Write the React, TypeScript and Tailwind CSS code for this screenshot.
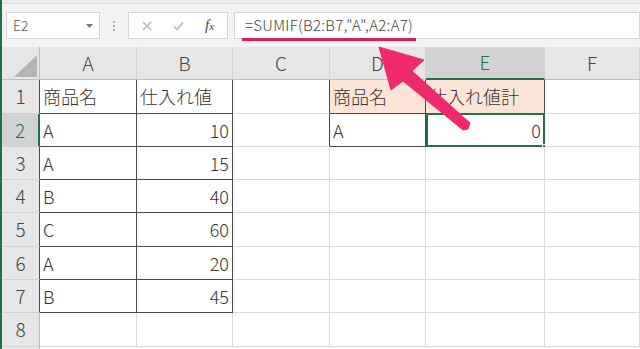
import React from "react";

type RowData = { n: number; a?: string; b?: string; d?: string; e?: string };

const rows: RowData[] = [
  { n: 1, a: "商品名", b: "仕入れ値", d: "商品名", e: "仕入れ値計" },
  { n: 2, a: "A", b: "10", d: "A", e: "0" },
  { n: 3, a: "A", b: "15" },
  { n: 4, a: "B", b: "40" },
  { n: 5, a: "C", b: "60" },
  { n: 6, a: "A", b: "20" },
  { n: 7, a: "B", b: "45" },
  { n: 8 },
];

const rowH = ["h-[34px]", "h-[33px]", "h-[33px]", "h-[33px]", "h-[34px]", "h-[33px]", "h-[33px]", "h-[34px]"];

const DARK_R = "border-r-[#4a4a4a]";
const DARK_B = "border-b-[#4a4a4a]";
const LIGHT_R = "border-r-[#dadada]";
const LIGHT_B = "border-b-[#dadada]";

function Cell({
  w,
  text,
  right,
  darkR,
  darkB,
  bg,
  children,
}: {
  w: string;
  text?: string;
  right?: boolean;
  darkR?: boolean;
  darkB?: boolean;
  bg?: string;
  children?: React.ReactNode;
}) {
  return (
    <div
      className={[
        w,
        "relative shrink-0 flex items-center border-r border-b text-[18px] font-light text-[#333] whitespace-nowrap overflow-visible",
        right ? "justify-end pr-[3px]" : "pl-[3px]",
        darkR ? DARK_R : LIGHT_R,
        darkB ? DARK_B : LIGHT_B,
        bg ?? "bg-white",
      ].join(" ")}
    >
      {text}
      {children}
    </div>
  );
}

function ColHeader({ w, label, selected }: { w: string; label: string; selected?: boolean }) {
  return (
    <div
      className={[
        w,
        "shrink-0 flex items-center justify-center border-r border-r-[#d2d2d2] text-[19px] font-light",
        selected
          ? "bg-[#d2d2d2] border-b-2 border-b-[#217346] text-[#217346]"
          : "bg-[#e6e6e6] border-b border-b-[#bdbdbd] text-[#444]",
      ].join(" ")}
    >
      {label}
    </div>
  );
}

export default function App() {
  return (
    <div className="relative w-[640px] h-[349px] overflow-hidden flex bg-[#f3f3f3] font-['Noto_Sans_CJK_JP','Noto_Sans',sans-serif]">
      <div className="w-[2px] shrink-0 bg-[#217346]" />
      <div className="flex-1 flex flex-col min-w-0">
        {/* ribbon bottom */}
        <div className="h-[4px] shrink-0 bg-[#ebebeb] border-b border-[#dcdcdc]" />
        <div className="h-[8px] shrink-0" />
        {/* formula bar */}
        <div className="h-[27px] shrink-0 flex pl-[4px]">
          <div className="w-[94px] shrink-0 bg-white border border-[#d4d4d4] flex items-center justify-between pl-[6px] pr-[6px]">
            <span className="text-[14px] text-[#555] font-light">E2</span>
            <svg width="7" height="4" viewBox="0 0 7 4">
              <polygon points="0,0 7,0 3.5,4" fill="#777" />
            </svg>
          </div>
          <div className="w-[28px] shrink-0 flex flex-col items-center justify-center gap-[2px]">
            <span className="w-[2px] h-[2px] bg-[#a8a8a8]" />
            <span className="w-[2px] h-[2px] bg-[#a8a8a8]" />
            <span className="w-[2px] h-[2px] bg-[#a8a8a8]" />
          </div>
          <div className="w-[100px] shrink-0 bg-white border border-[#d4d4d4] flex items-center">
            <svg className="ml-[13px]" width="10" height="10" viewBox="0 0 10 10">
              <path d="M1 1 L9 9 M9 1 L1 9" stroke="#b4b4b4" strokeWidth="1.4" fill="none" />
            </svg>
            <svg className="ml-[21px]" width="11" height="10" viewBox="0 0 11 10">
              <path d="M1 5.5 L4 8.5 L10 1.5" stroke="#b4b4b4" strokeWidth="1.4" fill="none" />
            </svg>
            <span className="ml-[21px] italic text-[15px] text-[#444] font-['Liberation_Serif',serif] leading-none">
              f<span className="text-[11px]">x</span>
            </span>
          </div>
          <div className="ml-[6px] flex-1 bg-white border border-[#d4d4d4] flex items-start pt-[2px]">
            <span className="ml-[7px] inline-block px-[3px] pb-[3px] leading-[20px] text-[15px] tracking-[0.3px] font-light text-[#444] border-b-[3px] border-[#de1b5c] -mb-[6px]">
              =SUMIF(B2:B7,"A",A2:A7)
            </span>
          </div>
        </div>
        <div className="h-[8px] shrink-0" />
        {/* column header */}
        <div className="h-[33px] shrink-0 flex">
          <div className="w-[38px] shrink-0 bg-[#e6e6e6] border-r border-b border-[#bdbdbd]">
            <svg width="37" height="32" viewBox="0 0 37 32">
              <polygon points="12,30 35,8 35,30" fill="#b5b5b5" />
            </svg>
          </div>
          <ColHeader w="w-[97px]" label="A" />
          <ColHeader w="w-[96px]" label="B" />
          <ColHeader w="w-[97px]" label="C" />
          <ColHeader w="w-[96px]" label="D" />
          <ColHeader w="w-[119px]" label="E" selected />
          <ColHeader w="flex-1" label="F" />
        </div>
        {/* rows */}
        {rows.map((r, i) => {
          const inTable = r.n <= 7;
          const inSummary = r.n <= 2;
          return (
            <div key={r.n} className={`${rowH[i]} shrink-0 flex`}>
              <div
                className={[
                  "w-[38px] shrink-0 flex items-center justify-center border-b border-b-[#d2d2d2] text-[19px] font-light",
                  r.n === 2
                    ? "bg-[#d2d2d2] text-[#217346] border-r-2 border-r-[#217346]"
                    : "bg-[#e6e6e6] text-[#444] border-r",
                  r.n !== 2 && inTable ? "border-r-[#4a4a4a]" : "",
                  r.n !== 2 && !inTable ? "border-r-[#bdbdbd]" : "",
                ].join(" ")}
              >
                {r.n}
              </div>
              <Cell w="w-[97px]" text={r.a} darkR={inTable} darkB={inTable} />
              <Cell w="w-[96px]" text={r.b} right={r.n > 1} darkR={inTable} darkB={inTable} />
              <Cell w="w-[97px]" darkR={inSummary} />
              <Cell
                w="w-[96px]"
                text={r.d}
                darkR={inSummary}
                darkB={inSummary}
                bg={r.n === 1 ? "bg-[#fce4d6]" : "bg-white"}
              />
              <Cell
                w="w-[119px]"
                text={r.e}
                right={r.n === 2}
                darkR={inSummary}
                darkB={inSummary}
                bg={r.n === 1 ? "bg-[#fce4d6]" : "bg-white"}
              >
                {r.n === 2 && (
                  <>
                    <div className="absolute left-0 -top-[1px] -right-[1px] -bottom-[1px] border-2 border-[#217346] pointer-events-none" />
                    <div className="absolute -right-[4px] -bottom-[4px] w-[6px] h-[6px] bg-[#217346] border border-white" />
                  </>
                )}
              </Cell>
              <Cell w="flex-1" />
            </div>
          );
        })}
        <div className="flex-1 flex">
          <div className="w-[38px] shrink-0 bg-[#e6e6e6] border-r border-[#bdbdbd]" />
          <div className="flex-1 bg-white" />
        </div>
      </div>
      {/* annotation arrow */}
      <svg className="absolute left-0 top-0 pointer-events-none" width="640" height="349" viewBox="0 0 640 349">
        <polygon
          points="379,47 424,60 412,71 470,123 468,129 463,130 403,81 391,90"
          fill="#f0286c"
          strokeLinejoin="round"
          stroke="#f0286c"
          strokeWidth="1"
        />
      </svg>
    </div>
  );
}
